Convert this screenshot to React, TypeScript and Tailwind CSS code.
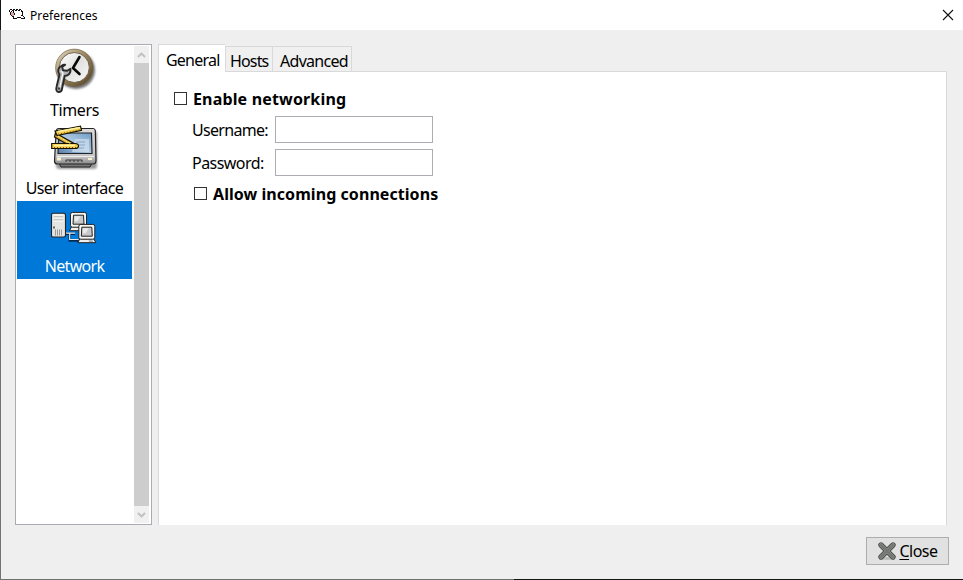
import React from "react";

const sans = "font-['Noto_Sans','Open_Sans',sans-serif]";

function SheepIcon() {
  return (
    <svg width="16" height="13" viewBox="0 0 16 13" className="block" shapeRendering="crispEdges">
      <path d="M3 2h9v1h1v5h1v2H5V9H3V7H1V2z" fill="#fff" />
      <path d="M1 4h3v1h1v3H2V6H1z" fill="#dfaaa7" />
      <path d="M1 1h2v1H1zM0 2h1v2H0zM3 2h2v1H3zM4 1h2v1H4zM6 2h2v1H6zM7 1h2v1H7zM9 2h2v1H9zM10 1h2v1h-2zM12 2h1v2h-1zM13 3h1v5h-1zM14 8h1v1h-1zM15 9h1v2h-1zM12 10h3v1h-3zM11 9h1v1h-1zM8 9h3v1H8zM7 10h1v1H7zM4 10h3v1H4zM4 8h1v2H4zM1 4h1v3H1zM2 7h1v1H2zM3 8h1v1H3zM4 3h1v2H4zM2 3h1v1H2zM5 5h1v2H5zM12 7h1v1h-1z" fill="#111" />
    </svg>
  );
}

function TimersIcon() {
  return (
    <svg width="48" height="48" viewBox="0 0 48 48" className="block">
      <defs>
        <linearGradient id="rim" x1="0" y1="0" x2="1" y2="1">
          <stop offset="0" stopColor="#e8ddc6" />
          <stop offset=".45" stopColor="#9b8862" />
          <stop offset="1" stopColor="#4f3d20" />
        </linearGradient>
        <linearGradient id="dial" x1="0" y1="0" x2="1" y2="1">
          <stop offset="0" stopColor="#fff" />
          <stop offset=".5" stopColor="#e2e2e1" />
          <stop offset="1" stopColor="#fafafa" />
        </linearGradient>
        <filter id="soft"><feGaussianBlur stdDeviation="1.2" /></filter>
      </defs>
      <circle cx="25" cy="23" r="19" fill="#000" opacity=".55" filter="url(#soft)" />
      <circle cx="23.3" cy="20.8" r="18.7" fill="url(#rim)" stroke="#6c5b3c" strokeWidth=".6" />
      <circle cx="23.3" cy="20.5" r="15" fill="url(#dial)" stroke="#716348" />
      <path d="M28.5 10L22 21L28.5 27" fill="none" stroke="#090909" strokeWidth="2.6" strokeLinecap="round" strokeLinejoin="round" />
      <path d="M11 18.5c-4 2-5 6-2.5 9L5.5 40c-.8 3 .3 5 2.3 5s3-1.5 3.2-3l2.7-13c4-.2 6.3-3.2 5.8-7.3l-3.3 2.1-4.2-.5-.8-3.4 3-2.2c-1-.2-2.2 0-3.2.8z" fill="#b2b2b2" stroke="#292929" strokeWidth="1.9" strokeLinejoin="round" />
      <path d="M10 24l2 2-3.6 16" fill="none" stroke="#f5f5f5" strokeWidth="1.3" />
      <circle cx="8" cy="41.5" r="1.2" fill="#444" />
    </svg>
  );
}

function InterfaceIcon() {
  return (
    <svg width="48" height="48" viewBox="0 0 48 48" className="block">
      <defs>
        <linearGradient id="screen" x1="0" y1="1" x2="1" y2="0">
          <stop offset="0" stopColor="#527aa9" />
          <stop offset=".5" stopColor="#adc9e2" />
          <stop offset="1" stopColor="#6e9bc7" />
        </linearGradient>
        <linearGradient id="shell" x1="0" y1="0" x2="0" y2="1">
          <stop offset="0" stopColor="#dcdcdc" />
          <stop offset=".8" stopColor="#c4c4c4" />
          <stop offset="1" stopColor="#888" />
        </linearGradient>
        <filter id="shade"><feGaussianBlur stdDeviation="1" /></filter>
      </defs>
      <rect x="5" y="6" width="41" height="38" rx="3" fill="#000" opacity=".4" filter="url(#shade)" />
      <path d="M8 38h33l-2 4H10z" fill="#777" stroke="#222" />
      <path d="M8 3.5h34q2 0 2.3 2l.7 30q0 3.5-3 3.5H6.5q-3 0-3-3l1.7-30q.3-2.5 2.8-2.5z" fill="url(#shell)" stroke="#242424" strokeWidth="1.2" />
      <path d="M6 31.5h37" stroke="#eee" />
      <path d="M8 8h32.5l.5 20.5H7z" fill="url(#screen)" stroke="#242424" strokeWidth="1.2" />
      <path d="M24 14h14v13H21z" fill="#d3e2ef" opacity=".65" />
      <path d="M25 17h9M25 20h9M25 23h8" stroke="#7899bd" strokeWidth=".8" />
      <path d="M6 32.5h4v3H6zM37 33h4v2h-4z" fill="#f8f0d0" />
      <path d="M15 37v-2h4v2m0-2h4v2m0-2h4v2m0-2h4v2" stroke="#3b3b3b" fill="none" />
      <path d="M4.5 8L23 18.5l-3 3L3.5 12z" fill="#dfb43b" stroke="#171200" strokeWidth="1.2" />
      <path d="M4 6L29.5 1.2l1 4.2L6 10.5z" fill="#f4ce4b" stroke="#171200" strokeWidth="1.2" />
      <path d="M.7 18.5H24q3.5 0 3.5 2.5T24 23.5H.7z" fill="#f4ce4b" stroke="#171200" strokeWidth="1.2" />
      <path d="M7 6.5l22-4M3 20.5h21" stroke="#fff0a4" strokeWidth="1.4" />
      <path d="M7 9.2l22-4.4M3 22.5h22" stroke="#72550c" strokeDasharray="1 2" />
      <path d="M7 11l13 8" stroke="#fff0a4" strokeDasharray="2 1" />
    </svg>
  );
}

function Monitor({ shift }: { shift: string }) {
  return (
    <g transform={shift}>
      <path d="M2 15h14l2 4H0z" fill="#eee" stroke="#222" />
      <rect x="1" y=".7" width="16" height="14.8" rx="2" fill="#f7f7f4" stroke="#222" strokeWidth="1" />
      <path d="M4 3.5h10l.5 9h-11z" fill="#c6c8ca" stroke="#222" />
      <path d="M5 4.5h6l-3 5H5z" fill="#e8e9e9" />
      <path d="M11 17.4h4" stroke="#777" />
    </g>
  );
}

function NetworkIcon() {
  return (
    <svg width="48" height="48" viewBox="0 0 48 48" className="block">
      <g transform="translate(0 5.5)">
        <path d="M15 25.3h9M18.7 25v7h9" stroke="#042b54" strokeWidth="2.4" fill="none" />
        <path d="M15 24.7h9M18.7 25v6h9" stroke="#e8edf1" strokeWidth="1.2" fill="none" />
        <path d="M2 4.7h10.5q2 0 2 2v20q0 1.8-2 1.8H2q-1.5 0-1.5-1.8v-20q0-2 1.5-2z" fill="#e4e4e0" stroke="#222" strokeWidth="1.1" />
        <path d="M3 8.5h9M3 11.5h9" stroke="#aaa" />
        <path d="M2.5 6.5h10M2.5 9.5h10M2.5 12.5h10" stroke="#fff" />
        <path d="M4.5 21v6M6.5 21v6M8.5 21v6M10.5 21v6" stroke="#999" />
        <rect x="2" y="18" width="2" height="2" fill="#666" />
        <Monitor shift="translate(18.5 3.2)" />
        <Monitor shift="translate(26.8 15.2)" />
      </g>
    </svg>
  );
}

function CloseIcon() {
  return (
    <svg width="20" height="20" viewBox="0 0 20 20" className="block shrink-0">
      <ellipse cx="10" cy="17.5" rx="7" ry="1.5" fill="#bcbcbc" />
      <path d="M4 4l12 12M16 4l-12 12" stroke="#494b47" strokeWidth="5.4" strokeLinecap="round" />
      <path d="M4 4l12 12M16 4l-12 12" stroke="#8f918c" strokeWidth="3.6" strokeLinecap="round" />
      <path d="M4 4l12 12M16 4l-12 12" stroke="#737570" strokeWidth="2.2" strokeLinecap="round" />
    </svg>
  );
}

function Label({ text, size }: { text: string; size: string }) {
  return <span className={`block whitespace-nowrap ${size}`}>{text}</span>;
}

function Category({ icon, text, spacing, selected }: { icon: React.ReactNode; text: string; spacing: string; selected?: boolean }) {
  return (
    <div className={`flex h-[78px] w-[115px] flex-col items-center pt-[2px] ${selected ? "bg-[#0078d7] text-white" : ""}`}>
      <div className="pl-px">{icon}</div>
      <div className="pt-[4px]"><Label text={text} size={spacing} /></div>
    </div>
  );
}

function Checkbox() {
  return <input type="checkbox" className="m-0 mb-[2px] block size-[13px] shrink-0 appearance-none border border-[#333] bg-white" />;
}

export default function App() {
  return (
    <div className={`flex h-[580px] w-[963px] flex-col overflow-hidden bg-[#efefef] text-[16px] leading-[22px] text-black ${sans}`}>
      <header className="flex h-[30px] shrink-0 items-center border-l border-[#151515] bg-white pr-[9px] pl-[8px]">
        <div className="pb-[2px]"><SheepIcon /></div>
        <span className="ml-[5px] pt-[2px] text-[12px] tracking-[0.08px]">Preferences</span>
        <svg width="12" height="12" viewBox="0 0 12 12" className="mb-px ml-auto block"><path d="M1 1l10 10M11 1L1 11" stroke="#111" strokeWidth="1.1" /></svg>
      </header>
      <main className="flex min-h-0 flex-1 flex-col border-l border-[#727272]">
        <div className="flex h-[495px] shrink-0 pt-[14px] pl-[14px]">
          <aside className="flex h-[481px] w-[137px] justify-between border border-[#a9acb2] bg-white pr-[2px] pb-px pl-px">
            <div>
              <Category icon={<TimersIcon />} text="Timers" spacing="tracking-[-0.35px]" />
              <Category icon={<InterfaceIcon />} text="User interface" spacing="tracking-[-0.58px]" />
              <Category icon={<NetworkIcon />} text="Network" spacing="tracking-[-0.7px]" selected />
            </div>
            <div className="mt-px flex w-[15px] flex-col bg-[#f0f0f0]">
              <svg width="15" height="17" viewBox="0 0 15 17"><path d="M4 11l3.5-3.5L11 11" fill="none" stroke="#bfbfbf" strokeWidth="1.8" /></svg>
              <div className="flex-1 bg-[#cdcdcd]" />
              <svg width="15" height="17" viewBox="0 0 15 17"><path d="M4 7l3.5 3.5L11 7" fill="none" stroke="#bfbfbf" strokeWidth="1.8" /></svg>
            </div>
          </aside>
          <section className="ml-[6px] flex w-[789px] flex-col">
            <nav className="flex h-[28px] shrink-0">
              <div className="flex w-[67px] border-t border-l border-[#d9d9d9] bg-white pt-[4px] pl-[7px]"><Label text="General" size="tracking-[-0.78px]" /></div>
              <div className="flex flex-1 border-b border-[#d9d9d9] pt-[2px]">
                <div className="flex w-[48px] border-t border-x border-[#d9d9d9] bg-[#f0f0f0] pt-[3px] pl-[4px]"><Label text="Hosts" size="tracking-[-0.85px]" /></div>
                <div className="flex w-[79px] border-t border-r border-[#d9d9d9] bg-[#f0f0f0] pt-[3px] pl-[7px]"><Label text="Advanced" size="tracking-[-0.7px]" /></div>
              </div>
            </nav>
            <form className="flex flex-1 flex-col border-x border-[#d9d9d9] bg-white pt-[16px] pl-[15px]">
              <label className="flex h-[22px] items-center gap-[6px]"><Checkbox /><b className="whitespace-nowrap tracking-[0.16px]">Enable networking</b></label>
              <div className="mt-[6px] flex items-center pl-[18px]"><div className="w-[83px]"><Label text="Username:" size="tracking-[-0.7px]" /></div><input className="h-[27px] w-[158px] border border-[#abadb3] bg-white outline-none" /></div>
              <div className="mt-[6px] flex items-center pl-[18px]"><div className="w-[83px]"><Label text="Password:" size="tracking-[-0.54px]" /></div><input className="h-[27px] w-[158px] border border-[#abadb3] bg-white outline-none" /></div>
              <label className="mt-[7px] flex h-[22px] items-center gap-[6px] pl-[20px]"><Checkbox /><b className="whitespace-nowrap tracking-[0.06px]">Allow incoming connections</b></label>
            </form>
          </section>
        </div>
        <footer className="flex flex-1 items-start justify-end pt-[12px] pr-[14px]">
          <button className="flex h-[28px] w-[83px] items-center justify-center gap-[2px] border border-[#adadad] bg-[#e1e1e1]"><CloseIcon /><span className="whitespace-nowrap tracking-[-0.5px]"><span className="underline decoration-1 underline-offset-[2px]">C</span>lose</span></button>
        </footer>
        <div className="flex h-px shrink-0"><div className="w-[513px] bg-[#707070]" /><div className="flex-1 bg-[#151515]" /></div>
      </main>
    </div>
  );
}
